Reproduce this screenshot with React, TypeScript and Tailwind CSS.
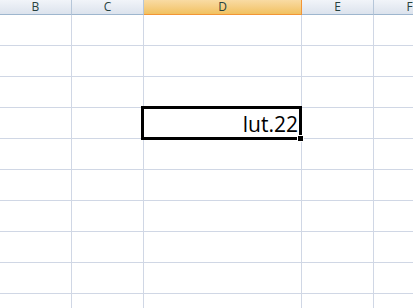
const cols = [
  { key: "B", w: "w-[72px]" },
  { key: "C", w: "w-[72px]" },
  { key: "D", w: "w-[158px]" },
  { key: "E", w: "w-[72px]" },
  { key: "F", w: "w-[72px]" },
];

const rows = Array.from({ length: 10 }, (_, i) => i);

export default function App() {
  return (
    <div className="relative w-[413px] h-[308px] overflow-hidden bg-white font-['Open_Sans',sans-serif]">
      {/* column headers */}
      <div className="flex h-[15px]">
        {cols.map((c) =>
          c.key === "D" ? (
            <div
              key={c.key}
              className={`${c.w} shrink-0 flex items-center justify-center border-r border-b border-r-[#f29536] border-b-[#f29536] bg-gradient-to-b from-[#f9dba3] to-[#f1c15f] text-[12px] leading-[12px] text-[#27413e]`}
            >
              {c.key}
            </div>
          ) : (
            <div
              key={c.key}
              className={`${c.w} shrink-0 flex items-center justify-center border-r border-b border-r-[#b6c6d9] border-b-[#9eb6ce] bg-gradient-to-b from-[#f1f4f9] to-[#dce3ed] text-[12px] leading-[12px] text-[#27413e]`}
            >
              {c.key}
            </div>
          )
        )}
      </div>

      {/* grid */}
      {rows.map((r) => (
        <div key={r} className="flex h-[31px]">
          {cols.map((c) => (
            <div
              key={c.key}
              className={`${c.w} shrink-0 flex items-end justify-end pr-[3px] border-r border-b border-[#d0d7e5] text-[21px] leading-[28px] text-black`}
            >
              {r === 3 && c.key === "D" ? "lut.22" : ""}
            </div>
          ))}
        </div>
      ))}

      {/* active cell */}
      <div className="absolute left-[141px] top-[106px] w-[161px] h-[34px] border-[3px] border-black pointer-events-none" />
      <div className="absolute left-[297px] top-[135px] w-[7px] h-[7px] bg-black border border-white" />
    </div>
  );
}
